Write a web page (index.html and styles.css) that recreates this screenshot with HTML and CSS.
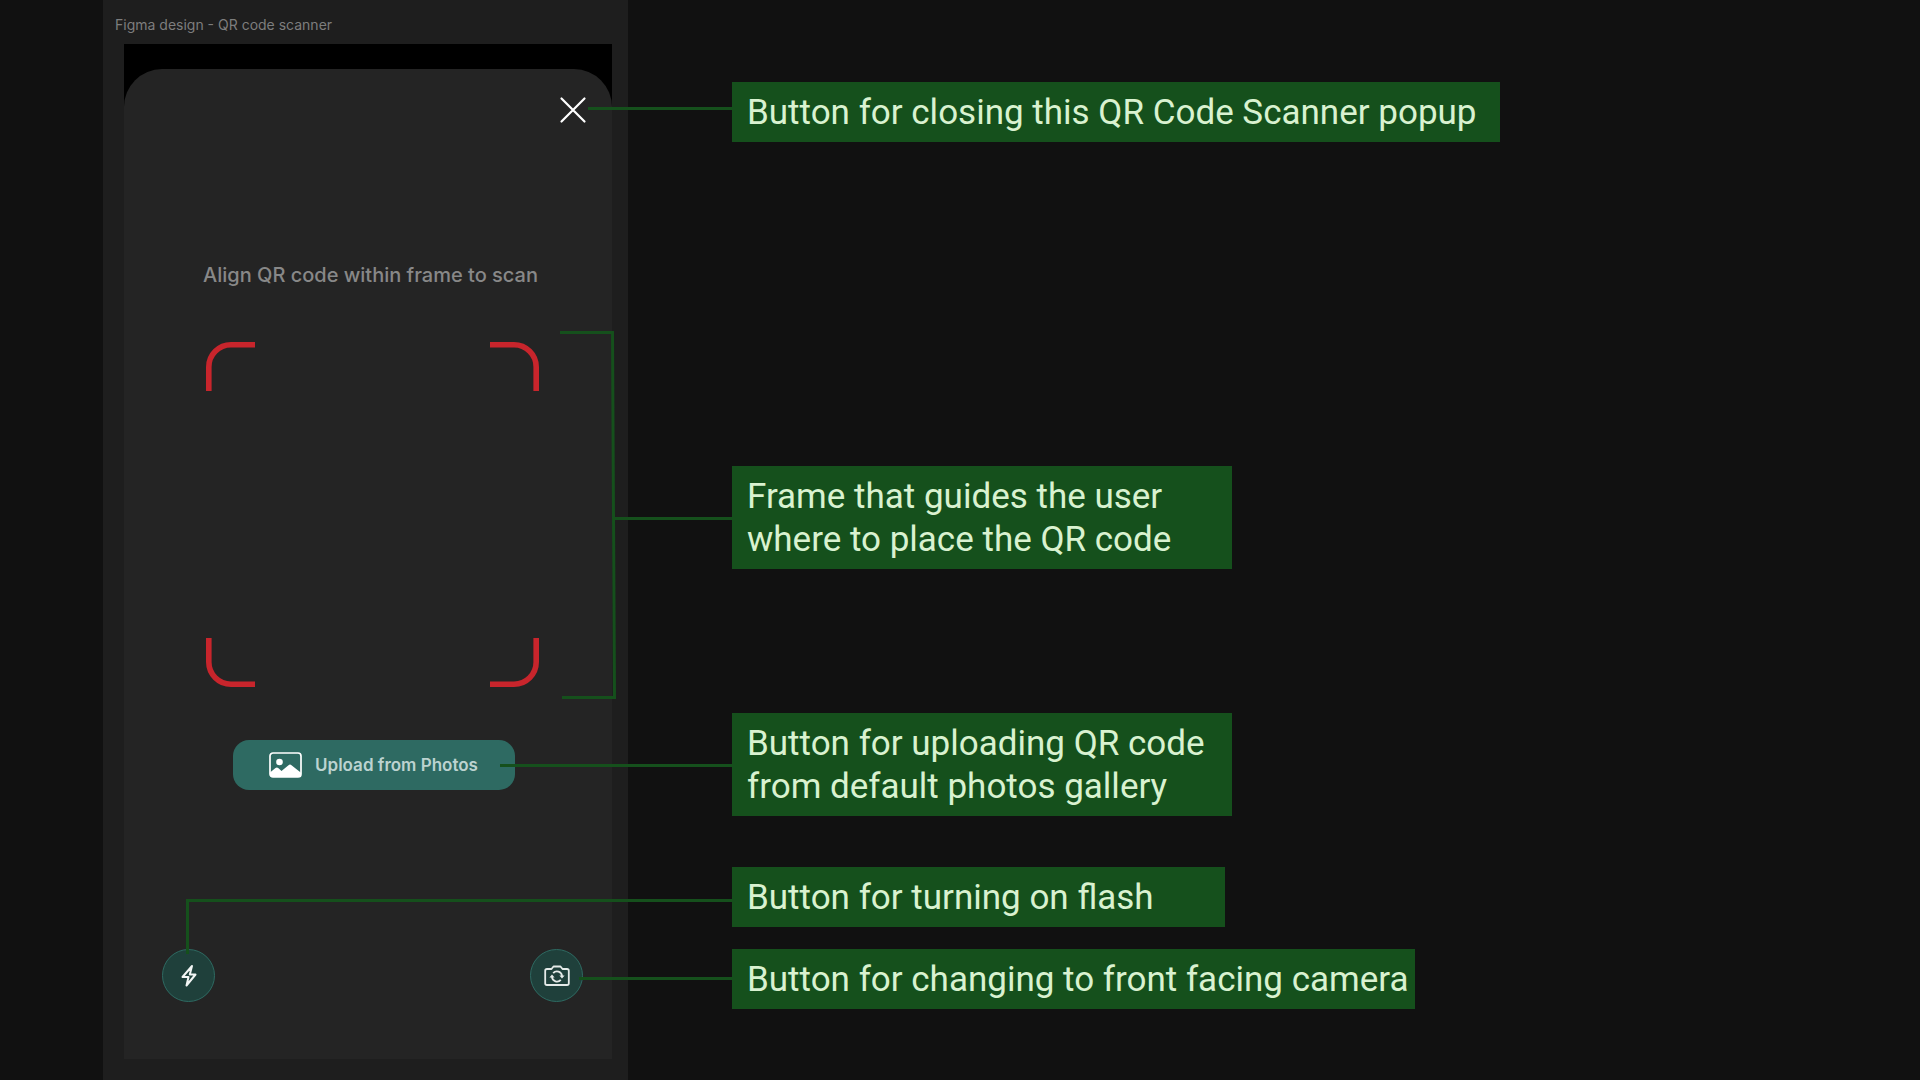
FILE: index.html
```html
<!DOCTYPE html>
<html lang="en">
<head>
<meta charset="utf-8">
<meta name="viewport" content="width=device-width, initial-scale=1">
<title>QR code scanner</title>
<link rel="stylesheet" href="styles.css">
</head>
<body>
<main class="slide">
  <section class="board">
    <h1 class="board-title">Figma design - QR code scanner</h1>
    <div class="phone">
      <div class="sheet">
        <button class="close" type="button" aria-label="Close">
          <svg width="28" height="28" viewBox="0 0 28 28" fill="none" stroke="#fff" stroke-width="2.2" stroke-linecap="round"><path d="M2.5 2.5 25.5 25.5M25.5 2.5 2.5 25.5"/></svg>
        </button>
        <p class="hint">Align QR code within frame to scan</p>
        <svg class="frame" width="333" height="345" viewBox="0 0 333 345" fill="none" stroke="#c8252c" stroke-width="5.6" aria-hidden="true">
          <path d="M2.8 49V25A22.2 22.2 0 0 1 25 2.8H49"/>
          <path d="M284 2.8H308A22.2 22.2 0 0 1 330.2 25V49"/>
          <path d="M2.8 296V320A22.2 22.2 0 0 0 25 342.2H49"/>
          <path d="M284 342.2H308A22.2 22.2 0 0 0 330.2 320V296"/>
        </svg>
        <button class="upload" type="button">
          <svg width="33" height="26" viewBox="0 0 33 26" aria-hidden="true"><rect x="1" y="1" width="31" height="24" rx="3" fill="none" stroke="#fff" stroke-width="1.7"/><circle cx="10.5" cy="10" r="3.3" fill="#fff"/><path d="M1 20.5 6.5 16Q8 15 9.5 16.3L12.5 19 19.5 13.2Q21 12 22.5 13.2L32 20.8V22Q32 25 29 25H4Q1 25 1 22Z" fill="#fff"/></svg>
          <span>Upload from Photos</span>
        </button>
        <div class="tools">
          <button class="round" type="button" aria-label="Flash">
            <svg width="18" height="24" viewBox="0 0 18 24" fill="none" stroke="#f2f5f4" stroke-width="2" stroke-linejoin="round"><path d="M12 2 2.5 13H8.5L6.5 21.5 15.5 10.5H9.8Z"/></svg>
          </button>
          <button class="round" type="button" aria-label="Switch camera">
            <svg width="26" height="22" viewBox="0 0 26 22" fill="none" stroke="#e4eae8" stroke-width="1.8" stroke-linejoin="round"><path d="M3 4H7.5L9.5 1.5H16.5L18.5 4H23Q24.8 4 24.8 5.8V18.2Q24.8 20 23 20H3Q1.2 20 1.2 18.2V5.8Q1.2 4 3 4Z"/><path d="M9.2 8.2A5 5 0 0 1 18 11M16.8 14.8A5 5 0 0 1 8 12"/><path d="M15.4 10.5H20.6L18 13.5ZM5.4 12.5H10.6L8 9.5Z" fill="#e4eae8" stroke="none"/></svg>
          </button>
        </div>
      </div>
    </div>
  </section>
  <section class="notes">
    <p class="note note-close">Button for closing this QR Code Scanner popup</p>
    <p class="note note-frame">Frame that guides the user where to place the QR code</p>
    <p class="note note-upload">Button for uploading QR code from default photos gallery</p>
    <p class="note note-flash">Button for turning on flash</p>
    <p class="note note-camera">Button for changing to front facing camera</p>
  </section>
  <svg class="connectors" width="760" height="1080" viewBox="0 0 760 1080" fill="none" stroke="#15501c" stroke-width="3" aria-hidden="true">
    <path d="M588 108.5H734"/>
    <path d="M560 332.5H612.5L614.5 697.5H562M614 518.5H734"/>
    <path d="M500 765.5H734"/>
    <path d="M187.5 954V900.5H734"/>
    <path d="M579 978.5H734"/>
  </svg>
</main>
</body>
</html>
```
FILE: styles.css
```css
* { box-sizing: border-box; }

body {
  margin: 0;
  background: #111111;
  font-family: Inter, "Liberation Sans", sans-serif;
}

h1, p { margin: 0; }

button {
  padding: 0;
  border: 0;
  background: none;
  color: inherit;
  font: inherit;
  cursor: pointer;
}

svg { display: block; }

.slide {
  position: relative;
  display: flex;
  align-items: stretch;
  gap: 104px;
  min-height: 100vh;
  padding-left: 103px;
}

.board {
  display: flex;
  flex-direction: column;
  flex: 0 0 525px;
  padding: 16px 16px 21px 21px;
  background: #1e1e1e;
}

.board-title {
  height: 28px;
  margin-left: -9px;
  color: #7d7d7d;
  font-size: 14px;
  font-weight: 400;
  line-height: 18px;
}

.phone {
  display: flex;
  flex: 1;
  padding-top: 25px;
  background: linear-gradient(#000 80px, #242424 80px);
}

.sheet {
  display: flex;
  flex: 1;
  flex-direction: column;
  align-items: center;
  padding: 27px 29px 57px 38px;
  border-radius: 38px 38px 0 0;
  background: #242424;
}

.close {
  align-self: flex-end;
  margin-right: -4px;
}

.hint {
  margin-top: 137px;
  margin-right: 4px;
  color: #888888;
  font-size: 20px;
  font-weight: 500;
  line-height: 28px;
}

.frame { margin-top: 53px; }

.upload {
  display: flex;
  align-items: center;
  justify-content: center;
  gap: 13px;
  width: 282px;
  height: 50px;
  margin-top: 53px;
  margin-left: 2px;
  border-radius: 16px;
  background: #2e6a62;
  color: #bcd3d0;
  font-size: 17px;
  font-weight: 600;
}

.tools {
  display: flex;
  justify-content: space-between;
  align-self: stretch;
  margin-top: auto;
}

.round {
  display: flex;
  align-items: center;
  justify-content: center;
  width: 53px;
  height: 53px;
  border: 1px solid #2e6a62;
  border-radius: 50%;
  background: #1f403b;
}

.notes {
  display: flex;
  flex: 1;
  flex-direction: column;
  align-items: flex-start;
  padding-top: 82px;
}

.note {
  max-width: 100%;
  padding: 9px 4px 8px 15px;
  background: #15501c;
  color: #d9f2d0;
  font-family: Roboto, "Liberation Sans", sans-serif;
  font-size: 35px;
  line-height: 43px;
}

.note-close { width: 768px; margin-bottom: 324px; }
.note-frame { width: 500px; margin-bottom: 144px; }
.note-upload { width: 500px; margin-bottom: 51px; }
.note-flash { width: 493px; margin-bottom: 22px; }
.note-camera { width: 683px; }

.connectors {
  position: absolute;
  top: 0;
  left: 0;
}
```
